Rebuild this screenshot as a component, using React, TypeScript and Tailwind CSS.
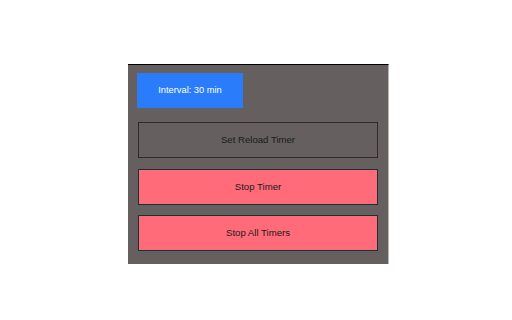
export default function App() {
  return (
    <div className="min-h-screen bg-white pt-[64px] pl-[128px]" style={{ fontFamily: '"Liberation Sans", Arial, sans-serif' }}>
      <div className="w-[261px] h-[200px] bg-[#65605f] border-t border-black border-r border-r-[#b8b6b5] pt-[8px] pl-[9px]">
        <div className="w-[106px] h-[35px] bg-[#2b7cfb] flex items-center justify-center text-white text-[9.3px]">
          Interval: 30 min
        </div>
        <div className="ml-[1px] mt-[14px] flex flex-col">
          <button className="w-[240px] h-[36px] border border-[#2e2b2a] bg-[#65605f] text-[#1a1a1a] text-[9.6px]">
            Set Reload Timer
          </button>
          <button className="mt-[11px] w-[240px] h-[36px] border border-[#173433] bg-[#ff6b78] text-[#1a1a1a] text-[9.6px]">
            Stop Timer
          </button>
          <button className="mt-[10px] w-[240px] h-[36px] border border-[#173433] bg-[#ff6b78] text-[#1a1a1a] text-[9.6px]">
            Stop All Timers
          </button>
        </div>
      </div>
    </div>
  );
}
